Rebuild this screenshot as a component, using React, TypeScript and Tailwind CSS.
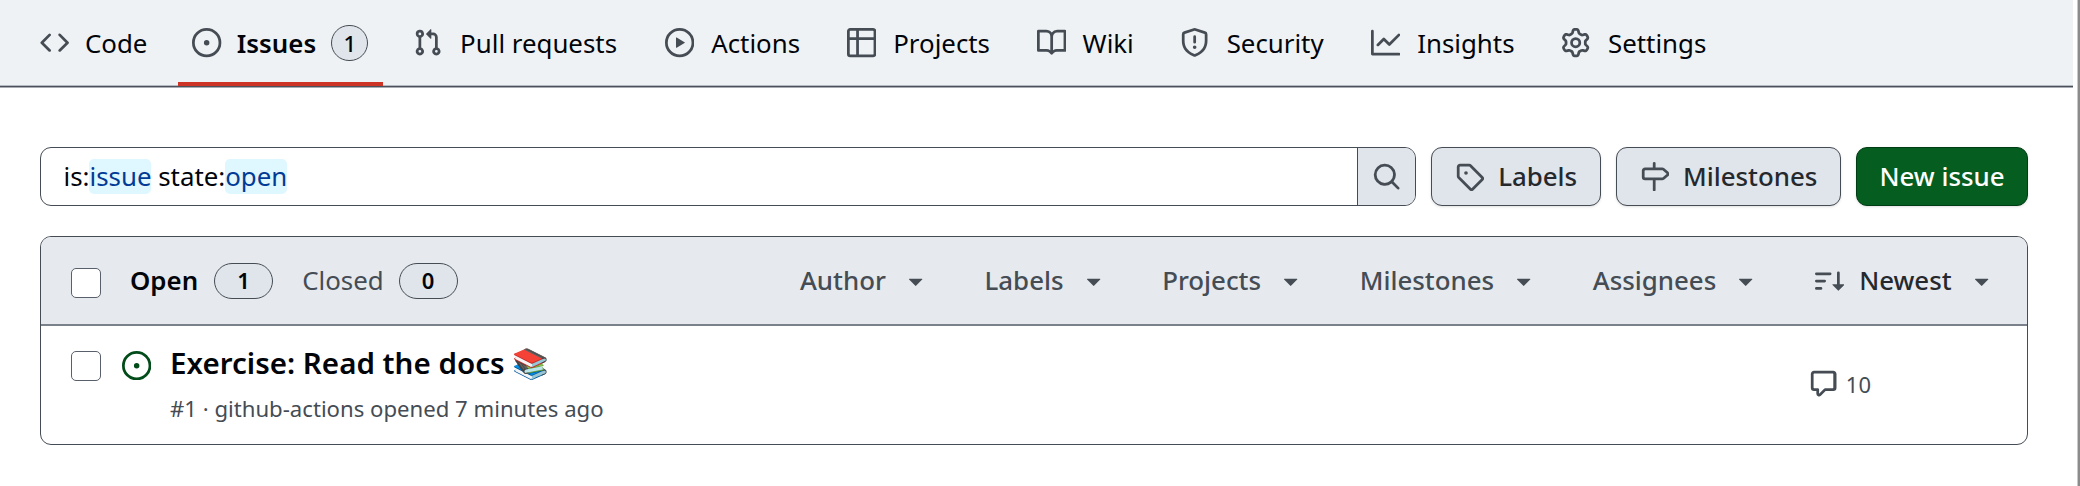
import React from "react";

const ICONS = {
  code: "m11.28 3.22 4.25 4.25a.75.75 0 0 1 0 1.06l-4.25 4.25a.749.749 0 0 1-1.275-.326.749.749 0 0 1 .215-.734L13.94 8l-3.72-3.72a.749.749 0 0 1 .326-1.275.749.749 0 0 1 .734.215Zm-6.56 0a.751.751 0 0 1 1.042.018.751.751 0 0 1 .018 1.042L2.06 8l3.72 3.72a.749.749 0 0 1-.326 1.275.749.749 0 0 1-.734-.215L.47 8.53a.75.75 0 0 1 0-1.06Z",
  issue: "M8 9.5a1.5 1.5 0 1 0 0-3 1.5 1.5 0 0 0 0 3ZM8 0a8 8 0 1 1 0 16A8 8 0 0 1 8 0ZM1.5 8a6.5 6.5 0 1 0 13 0 6.5 6.5 0 0 0-13 0Z",
  pull: "M1.5 3.25a2.25 2.25 0 1 1 3 2.122v5.256a2.251 2.251 0 1 1-1.5 0V5.372A2.25 2.25 0 0 1 1.5 3.25Zm5.677-.177L9.573.677A.25.25 0 0 1 10 .854V2.5h1A2.5 2.5 0 0 1 13.5 5v5.628a2.251 2.251 0 1 1-1.5 0V5a1 1 0 0 0-1-1h-1v1.646a.25.25 0 0 1-.427.177L7.177 3.427a.25.25 0 0 1 0-.354ZM3.75 2.5a.75.75 0 1 0 0 1.5.75.75 0 0 0 0-1.5Zm0 9.5a.75.75 0 1 0 0 1.5.75.75 0 0 0 0-1.5Zm8.25.75a.75.75 0 1 0 1.5 0 .75.75 0 0 0-1.5 0Z",
  play: "M8 0a8 8 0 1 1 0 16A8 8 0 0 1 8 0ZM1.5 8a6.5 6.5 0 1 0 13 0 6.5 6.5 0 0 0-13 0Zm4.879-2.773 4.264 2.559a.25.25 0 0 1 0 .428l-4.264 2.559A.25.25 0 0 1 6 10.559V5.442a.25.25 0 0 1 .379-.215Z",
  table: "M0 1.75C0 .784.784 0 1.75 0h12.5C15.216 0 16 .784 16 1.75v12.5A1.75 1.75 0 0 1 14.25 16H1.75A1.75 1.75 0 0 1 0 14.25ZM6.5 6.5v8h7.75a.25.25 0 0 0 .25-.25V6.5Zm8-1.5V1.75a.25.25 0 0 0-.25-.25H6.5V5Zm-13 1.5v7.75c0 .138.112.25.25.25H5v-8ZM5 5V1.5H1.75a.25.25 0 0 0-.25.25V5Z",
  book: "M0 1.75A.75.75 0 0 1 .75 1h4.253c1.227 0 2.317.59 3 1.501A3.743 3.743 0 0 1 11.006 1h4.245a.75.75 0 0 1 .75.75v10.5a.75.75 0 0 1-.75.75h-4.507a2.25 2.25 0 0 0-1.591.659l-.622.621a.75.75 0 0 1-1.06 0l-.622-.621A2.25 2.25 0 0 0 5.258 13H.75a.75.75 0 0 1-.75-.75Zm7.251 10.324.004-5.073-.002-2.253A2.25 2.25 0 0 0 5.003 2.5H1.5v9h3.757a3.75 3.75 0 0 1 1.994.574ZM8.755 4.75l-.004 7.322a3.752 3.752 0 0 1 1.992-.572H14.5v-9h-3.495a2.25 2.25 0 0 0-2.25 2.25Z",
  shield: "M7.467.133a1.748 1.748 0 0 1 1.066 0l5.25 1.68A1.75 1.75 0 0 1 15 3.48V7c0 1.566-.32 3.182-1.303 4.682-.983 1.498-2.585 2.813-5.032 3.855a1.697 1.697 0 0 1-1.33 0c-2.447-1.042-4.049-2.357-5.032-3.855C1.32 10.182 1 8.566 1 7V3.48a1.75 1.75 0 0 1 1.217-1.667Zm.61 1.429a.25.25 0 0 0-.153 0l-5.25 1.68a.25.25 0 0 0-.174.238V7c0 1.358.275 2.666 1.057 3.86.784 1.194 2.121 2.34 4.366 3.297a.196.196 0 0 0 .154 0c2.245-.956 3.582-2.104 4.366-3.298C13.225 9.666 13.5 8.36 13.5 7V3.48a.251.251 0 0 0-.174-.237l-5.25-1.68ZM8.75 4.75v3a.75.75 0 0 1-1.5 0v-3a.75.75 0 0 1 1.5 0ZM9 10.5a1 1 0 1 1-2 0 1 1 0 0 1 2 0Z",
  graph: "M1.5 1.75V13.5h13.75a.75.75 0 0 1 0 1.5H.75a.75.75 0 0 1-.75-.75V1.75a.75.75 0 0 1 1.5 0Zm14.28 2.53-5.25 5.25a.75.75 0 0 1-1.06 0L7 7.06 4.28 9.78a.751.751 0 0 1-1.042-.018.751.751 0 0 1-.018-1.042l3.25-3.25a.75.75 0 0 1 1.06 0L10 7.94l4.72-4.72a.751.751 0 0 1 1.042.018.751.751 0 0 1 .018 1.042Z",
  gear: "M8 0a8.2 8.2 0 0 1 .701.031C9.444.095 9.99.645 10.16 1.29l.288 1.107c.018.066.079.158.212.224.231.114.454.243.668.386.123.082.233.09.299.071l1.103-.303c.644-.176 1.392.021 1.82.63.27.385.506.792.704 1.218.315.675.111 1.422-.364 1.891l-.814.806c-.049.048-.098.147-.088.294.016.257.016.515 0 .772-.01.147.038.246.088.294l.814.806c.475.469.679 1.216.364 1.891a7.977 7.977 0 0 1-.704 1.217c-.428.61-1.176.807-1.82.63l-1.102-.302c-.067-.019-.177-.011-.3.071a5.909 5.909 0 0 1-.668.386c-.133.066-.194.158-.211.224l-.29 1.106c-.168.646-.715 1.196-1.458 1.26a8.006 8.006 0 0 1-1.402 0c-.743-.064-1.289-.614-1.458-1.26l-.289-1.106c-.018-.066-.079-.158-.212-.224a5.738 5.738 0 0 1-.668-.386c-.123-.082-.233-.09-.299-.071l-1.103.303c-.644.176-1.392-.021-1.82-.63a8.12 8.12 0 0 1-.704-1.218c-.315-.675-.111-1.422.363-1.891l.815-.806c.05-.048.098-.147.088-.294a6.214 6.214 0 0 1 0-.772c.01-.147-.038-.246-.088-.294l-.815-.806C.635 6.045.431 5.298.746 4.623a7.92 7.92 0 0 1 .704-1.217c.428-.61 1.176-.807 1.82-.63l1.102.302c.067.019.177.011.3-.071.214-.143.437-.272.668-.386.133-.066.194-.158.211-.224l.29-1.106C6.009.645 6.556.095 7.299.03 7.53.01 7.764 0 8 0Zm-.571 1.525c-.036.003-.108.036-.137.146l-.289 1.105c-.147.561-.549.967-.998 1.189-.173.086-.34.183-.5.29-.417.278-.97.423-1.529.27l-1.103-.303c-.109-.03-.175.016-.195.045-.22.312-.412.644-.573.99-.014.031-.021.11.059.19l.815.806c.411.406.562.957.53 1.456a4.709 4.709 0 0 0 0 .582c.032.499-.119 1.05-.53 1.456l-.815.806c-.081.08-.073.159-.059.19.162.346.353.677.573.989.02.03.085.076.195.046l1.102-.303c.56-.153 1.113-.008 1.53.27.161.107.328.204.501.29.447.222.85.629.997 1.189l.289 1.105c.029.109.101.143.137.146a6.6 6.6 0 0 0 1.142 0c.036-.003.108-.036.137-.146l.289-1.105c.147-.561.549-.967.998-1.189.173-.086.34-.183.5-.29.417-.278.97-.423 1.529-.27l1.103.303c.109.029.175-.016.195-.045.22-.313.411-.644.573-.99.014-.031.021-.11-.059-.19l-.815-.806c-.411-.406-.562-.957-.53-1.456a4.709 4.709 0 0 0 0-.582c-.032-.499.119-1.05.53-1.456l.815-.806c.081-.08.073-.159.059-.19a6.464 6.464 0 0 0-.573-.989c-.02-.03-.085-.076-.195-.046l-1.102.303c-.56.153-1.113.008-1.53-.27a4.44 4.44 0 0 0-.501-.29c-.447-.222-.85-.629-.997-1.189l-.289-1.105c-.029-.11-.101-.143-.137-.146a6.6 6.6 0 0 0-1.142 0ZM11 8a3 3 0 1 1-6 0 3 3 0 0 1 6 0ZM9.5 8a1.5 1.5 0 1 0-3.001.001A1.5 1.5 0 0 0 9.5 8Z",
  search: "M10.68 11.74a6 6 0 0 1-7.922-8.982 6 6 0 0 1 8.982 7.922l3.04 3.04a.749.749 0 0 1-.326 1.275.749.749 0 0 1-.734-.215ZM11.5 7a4.499 4.499 0 1 0-8.997 0A4.499 4.499 0 0 0 11.5 7Z",
  tag: "M1 7.775V2.75C1 1.784 1.784 1 2.75 1h5.025c.464 0 .91.184 1.238.513l6.25 6.25a1.75 1.75 0 0 1 0 2.474l-5.026 5.026a1.75 1.75 0 0 1-2.474 0l-6.25-6.25A1.752 1.752 0 0 1 1 7.775Zm1.5 0c0 .066.026.13.073.177l6.25 6.25a.25.25 0 0 0 .354 0l5.025-5.025a.25.25 0 0 0 0-.354l-6.25-6.25a.25.25 0 0 0-.177-.073H2.75a.25.25 0 0 0-.25.25ZM6 5a1 1 0 1 1 0 2 1 1 0 0 1 0-2Z",
  milestone: "M7.75 0a.75.75 0 0 1 .75.75V3h3.634c.414 0 .814.147 1.13.414l2.07 1.75a1.75 1.75 0 0 1 0 2.672l-2.07 1.75a1.75 1.75 0 0 1-1.13.414H8.5v5.25a.75.75 0 0 1-1.5 0V10H2.75A1.75 1.75 0 0 1 1 8.25v-3.5C1 3.784 1.784 3 2.75 3H7V.75A.75.75 0 0 1 7.75 0Zm4.384 8.5a.25.25 0 0 0 .161-.06l2.07-1.75a.248.248 0 0 0 0-.38l-2.07-1.75a.25.25 0 0 0-.161-.06H2.75a.25.25 0 0 0-.25.25v3.5c0 .138.112.25.25.25h9.384Z",
  sort: "M0 4.25a.75.75 0 0 1 .75-.75h7.5a.75.75 0 0 1 0 1.5H.75A.75.75 0 0 1 0 4.25Zm0 4a.75.75 0 0 1 .75-.75h4.5a.75.75 0 0 1 0 1.5H.75A.75.75 0 0 1 0 8.25Zm0 4a.75.75 0 0 1 .75-.75h2.5a.75.75 0 0 1 0 1.5H.75a.75.75 0 0 1-.75-.75ZM13.5 10h2.25a.25.25 0 0 1 .177.427l-3 3a.25.25 0 0 1-.354 0l-3-3A.25.25 0 0 1 9.75 10H12V3.75a.75.75 0 0 1 1.5 0V10Z",
  triangle: "m4.427 7.427 3.396 3.396a.25.25 0 0 0 .354 0l3.396-3.396A.25.25 0 0 0 11.396 7H4.604a.25.25 0 0 0-.177.427Z",
  comment: "M1 2.75C1 1.784 1.784 1 2.75 1h10.5c.966 0 1.75.784 1.75 1.75v7.5A1.75 1.75 0 0 1 13.25 12H9.06l-2.573 2.573A1.458 1.458 0 0 1 4 13.543V12H2.75A1.75 1.75 0 0 1 1 10.25Zm1.75-.25a.25.25 0 0 0-.25.25v7.5c0 .138.112.25.25.25h2a.75.75 0 0 1 .75.75v2.19l2.72-2.72a.749.749 0 0 1 .53-.22h4.25a.25.25 0 0 0 .25-.25v-7.5a.25.25 0 0 0-.25-.25Z",
};

type IconName = keyof typeof ICONS;

function Icon({ name, className = "" }: { name: IconName; className?: string }) {
  return (
    <svg viewBox="0 0 16 16" fill="currentColor" aria-hidden="true" className={`size-[29.33px] shrink-0 ${className}`}>
      <path d={ICONS[name]} />
    </svg>
  );
}

const TABS: { icon: IconName; label: string; count?: number }[] = [
  { icon: "code", label: "Code" },
  { icon: "issue", label: "Issues", count: 1 },
  { icon: "pull", label: "Pull requests" },
  { icon: "play", label: "Actions" },
  { icon: "table", label: "Projects" },
  { icon: "book", label: "Wiki" },
  { icon: "shield", label: "Security" },
  { icon: "graph", label: "Insights" },
  { icon: "gear", label: "Settings" },
];

const FILTERS = ["Author", "Labels", "Projects", "Milestones", "Assignees"];

function RepoNav() {
  return (
    <nav className="flex h-[87px] w-[2073px] gap-[15.1px] border-b border-[#4a515b] bg-[#eff2f5] pl-[25.33px] shadow-[0_1px_0_#a9adb3,inset_0_-1px_0_#b4b9c0]">
      {TABS.map((tab) => (
        <a
          key={tab.label}
          className={`flex h-[86px] items-center gap-[15px] border-b-4 px-[14.67px] pt-1 ${
            tab.count ? "border-[#cd3425] font-semibold" : "border-transparent"
          }`}
        >
          <Icon name={tab.icon} className="text-[#454c54]" />
          {/* The bold pseudo-element reserves the selected width, so tabs keep their size when activated. */}
          <span
            data-label={tab.label}
            className="text-center after:invisible after:block after:h-0 after:overflow-hidden after:font-semibold after:content-[attr(data-label)]"
          >
            {tab.label}
          </span>
          {tab.count && (
            <span className="flex h-[36px] w-[37px] items-center justify-center rounded-full border border-[#454c54] bg-[#e0e4eb] text-[22px] font-medium">
              {tab.count}
            </span>
          )}
        </a>
      ))}
    </nav>
  );
}

function Toolbar() {
  return (
    <div className="flex gap-[15px]">
      <div className="flex h-[59px] grow overflow-hidden rounded-[11px] border border-[#454c54]">
        <div className="flex grow items-center pl-[22.5px] whitespace-pre">
          is:<span className="rounded-[5px] bg-[#dff7ff] text-[#023b95]">issue</span> state:
          <span className="rounded-[5px] bg-[#dff7ff] text-[#023b95]">open</span>
        </div>
        <button className="flex w-[58px] items-center justify-center border-l border-[#454c54] bg-[#e0e4eb] text-[#454c54]">
          <Icon name="search" />
        </button>
      </div>
      <button className="flex h-[59px] w-[170px] items-center justify-center gap-[14px] rounded-[11px] border border-[#454c54] bg-[#e0e4eb] font-medium text-[#25292e] shadow-sm">
        <Icon name="tag" className="text-[#454c54]" />
        Labels
      </button>
      <button className="flex h-[59px] w-[225px] items-center justify-center gap-[14px] rounded-[11px] border border-[#454c54] bg-[#e0e4eb] font-medium text-[#25292e] shadow-sm">
        <Icon name="milestone" className="text-[#454c54]" />
        Milestones
      </button>
      <button className="flex h-[59px] w-[172px] items-center justify-center rounded-[11px] border border-[#013d14] bg-[#055d20] font-medium text-white shadow-sm">
        New issue
      </button>
    </div>
  );
}

function Counter({ value }: { value: number }) {
  return (
    <span className="flex h-[36px] w-[59px] items-center justify-center rounded-full border border-[#454c54] bg-[#e0e4eb] text-[22px] font-semibold text-[#010409]">
      {value}
    </span>
  );
}

function Checkbox() {
  return <span className="size-[30px] shrink-0 rounded-[5px] border border-[#59606b] bg-white" />;
}

function IssueList() {
  return (
    <section className="mt-[30px] h-[209px] overflow-hidden rounded-[11px] border border-[#454c54]">
      <header className="flex h-[89px] items-center border-b-2 border-[#7b818b] bg-[#e6eaef] pr-[31px] pl-[30px]">
        <div className="mt-1 flex">
          <Checkbox />
        </div>
        <span className="ml-[29px] font-semibold">Open</span>
        <span className="ml-[16px]">
          <Counter value={1} />
        </span>
        <span className="ml-[29px] text-[#454c54]">Closed</span>
        <span className="ml-[15px]">
          <Counter value={0} />
        </span>
        <div className="ml-auto flex items-center gap-[54px] font-medium text-[#454c54]">
          {FILTERS.map((label) => (
            <button key={label} className="flex items-center gap-[15.3px]">
              {label}
              <Icon name="triangle" />
            </button>
          ))}
          <button className="flex items-center gap-[15px]">
            <Icon name="sort" />
            <span className="text-[#25292e]">Newest</span>
            <Icon name="triangle" />
          </button>
        </div>
      </header>
      <article className="flex h-[118px] pl-[30px]">
        <div className="mt-[25px]">
          <div className="flex">
            <Checkbox />
          </div>
        </div>
        <Icon name="issue" className="mt-[25px] ml-[21px] text-[#024c1a]" />
        <div className="ml-[18.7px] flex flex-col">
          <h3 className="mt-[15px] text-[29.55px] leading-[44px] font-semibold">Exercise: Read the docs 📚</h3>
          <p className="mt-[7px] text-[22.15px] leading-[33px] text-[#454c54]">
            #1 · github-actions opened 7 minutes ago
          </p>
        </div>
        <div className="mr-[156px] ml-auto flex items-center gap-[8px] pb-[2px] text-[22px] text-[#454c54]">
          <Icon name="comment" />
          10
        </div>
      </article>
    </section>
  );
}

export default function App() {
  return (
    <div className="flex h-[486px] w-[2080px] justify-between overflow-hidden bg-white font-['Noto_Sans',sans-serif] text-[25.85px] leading-[35px] text-[#010409]">
      <div className="w-[2073px]">
        <RepoNav />
        <main className="w-[2028px] pt-[60px] pl-[40px]">
          <Toolbar />
          <IssueList />
        </main>
      </div>
      <div className="w-[3px] border-l border-[#c9c9c9] bg-[#8b8b8b]" />
    </div>
  );
}
